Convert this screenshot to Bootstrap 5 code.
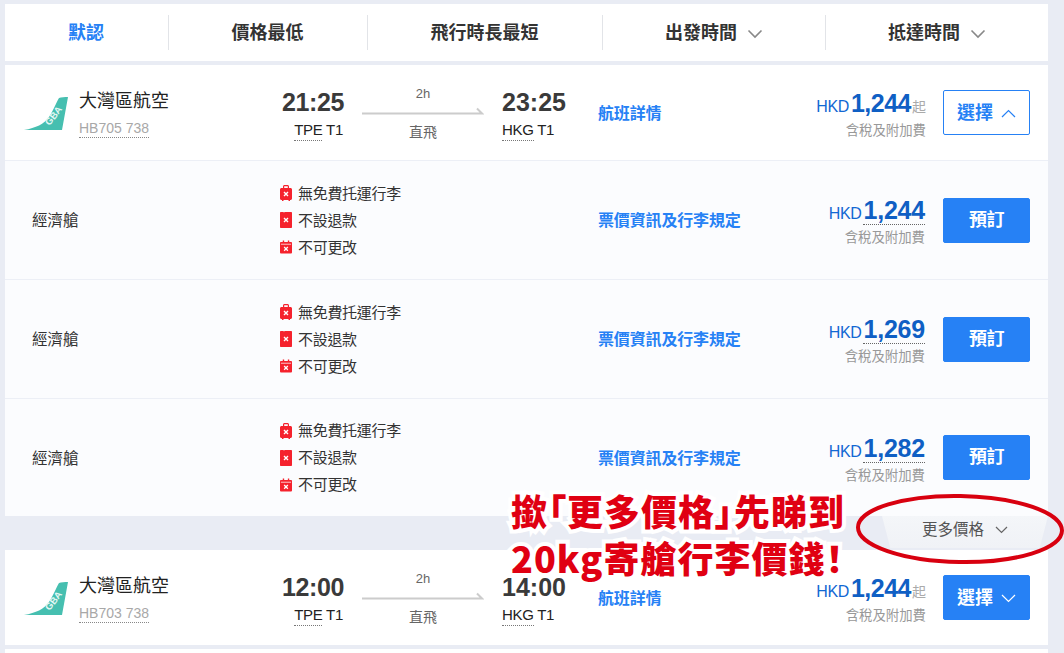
<!DOCTYPE html>
<html lang="zh-Hant">
<head>
<meta charset="utf-8">
<title>航班列表</title>
<link href="https://cdn.jsdelivr.net/npm/bootstrap@5.3.0/dist/css/bootstrap.min.css" rel="stylesheet">
<style>
html,body{height:653px;overflow:hidden}
body{background:#e9ecf4;font-family:"Liberation Sans","Noto Sans CJK TC",sans-serif;color:#333;position:relative}
.shell{padding:4px 16px 0 5px}
.sorter{height:57px;background:#fff;margin-bottom:4px}
.sort-tab{height:35px;font-size:18px;font-weight:700;color:#333;gap:10px;padding-top:2px}
.sort-tab+.sort-tab{border-left:1px solid #e2e4e8}
.w1{width:163px;padding-right:1px}.w2{width:199px;padding-right:1px}.w3{width:235px;padding-right:1px}.w4{width:223px}.w5{width:223px}
.sort-on{color:#2681f5}
.chev{width:16px;height:10px;fill:none;stroke:#888;stroke-width:1.6}
.flight,.fare{display:grid;grid-template-columns:270px 323px 201px 127px 122px;align-items:center}
.flight{height:95px;background:#fff}
.fare{height:118px;background:#fbfcfe;border-top:1px solid #eceff6}
.fare.first{height:119px}
.airline{padding-left:18px;gap:10px}
.airline svg{width:46px;height:36px;flex:none}
.airline-text{margin-top:3px}
.carrier{font-size:18px;line-height:24px;color:#222}
.craft{display:inline-block;font-size:14px;line-height:18px;color:#a8a8a8;border-bottom:1px dotted #888;margin-top:6px}
.route{padding-left:7px}
.stop{flex:none;margin-top:2px}
.stop-from{width:61px;text-align:right}
.stop-to{padding-left:18px}
.clock{font-size:25px;line-height:28px;font-weight:700;color:#3a3a3a;letter-spacing:-.4px}
.stop-to .clock{letter-spacing:0}
.port{font-size:15px;line-height:20px;letter-spacing:-.3px;color:#222;margin-top:4px}
.port span{border-bottom:1px dotted #777;padding-bottom:2px}
.leg{width:122px;margin-left:19px;text-align:center;color:#666}
.leg-top{font-size:13px;line-height:16px;margin-bottom:5px}
.leg-bot{font-size:14px;line-height:18px;margin-top:8px}
.leg svg{display:block;width:122px;height:8px}
.deep{font-size:16px;font-weight:700;color:#2681f5;text-decoration:none;letter-spacing:-.15px;margin-top:2px}
.cost{text-align:right;padding-top:3px}
.cost-top{display:flex;justify-content:flex-end;align-items:baseline;line-height:29px}
.hkd{font-size:16px;letter-spacing:-.4px;color:#1268d3;margin-right:2px}
.amt{font-size:25px;font-weight:700;color:#0f5fc4;letter-spacing:-.5px}
.qi{font-size:14px;color:#aaa;margin-left:1px}
.fee{font-size:13.4px;line-height:18px;color:#999}
.fare .amt{border-bottom:1px dotted #666;line-height:28px;letter-spacing:-.2px}
.fare .fee{margin-top:1px}
.fare .cost{padding-right:1px}
.act{padding-left:17px}
.btn-pick,.btn-book{width:87px;height:45px;border-radius:2px;font-size:18px;font-weight:700;display:flex;align-items:center;justify-content:center;gap:8px;padding:0;border:1px solid #2681f5}
.btn-pick{background:#fff;color:#2681f5;padding-top:2px}
.btn-pick svg{width:15px;height:9px;fill:none;stroke:#2681f5;stroke-width:1.2}
.btn-fill{background:#2681f5;color:#fff}
.btn-fill svg{stroke:#fff}
.btn-book{background:#2681f5;color:#fff;letter-spacing:-.5px}
.label{font-size:15.5px;padding-left:27px;color:#333;margin-top:2px}
.rules{padding-left:5px;margin:0;list-style:none;font-size:15px;line-height:27px;color:#333;letter-spacing:-.3px}
.rules li{display:flex;align-items:center;gap:6px;margin-left:0}
.rules svg{width:12px;height:16px;flex:none;fill:#f5222d}
.more-bar{height:34px;display:flex;justify-content:flex-end}
.more-tab{width:166px;height:32px;background:linear-gradient(#f4f6f9,#f0f2f6);clip-path:polygon(0 0,100% 0,95% 100%,5% 100%);font-size:15.5px;color:#555;gap:11px;padding-bottom:5px}
.more-tab svg{width:13px;height:8px;fill:none;stroke:#666;stroke-width:1.2}
.next-sliver{height:20px;background:#fff;margin-top:4px}
.callout{position:absolute;left:511px;top:487px;font-family:"Noto Sans CJK TC",sans-serif;font-weight:900;font-size:36px;line-height:47px;color:#e00012;-webkit-text-stroke:8px #fff;paint-order:stroke fill;font-feature-settings:"palt";white-space:nowrap;letter-spacing:1px}
.ring{position:absolute;left:850px;top:488px;width:214px;height:84px;fill:none;stroke:#d8000f;stroke-width:4}
</style>
</head>
<body>
<svg width="0" height="0" class="position-absolute">
  <defs>
    <symbol id="tail" viewBox="0 0 46 36">
      <path d="M1 35C13 33 21 29 26 22C30 16 33 8 36 3C38 2 42 2 45 2L39 35Z" fill="#46bfb0"/>
      <text x="0" y="0" transform="translate(26.600 31) rotate(-52)" font-family="Liberation Sans" font-size="9.500" font-weight="700" fill="#e4f7f4">GBA</text>
    </symbol>
    <symbol id="ic-bag" viewBox="0 0 12 16">
      <path d="M3 3V1.500C3 .7 3.700 0 4.500 0h3C8.300 0 9 .7 9 1.500V3h1.500C11.300 3 12 3.700 12 4.500v9c0 .8-.7 1.500-1.500 1.500H10v1H8.500v-1h-5v1H2v-1h-.5C.7 15 0 14.300 0 13.500v-9C0 3.700.7 3 1.500 3zM4.200 3h3.600V1.200H4.200z"/>
      <path d="M4 7l4 4M8 7l-4 4" stroke="#fff" stroke-width="1.400"/>
    </symbol>
    <symbol id="ic-tix" viewBox="0 0 12 16">
      <path d="M1 0h2.500c0 .8 1 .8 1 0h6.500c.6 0 1 .4 1 1v14c0 .6-.4 1-1 1H1c-.6 0-1-.4-1-1V1c0-.6.4-1 1-1z"/>
      <path d="M4 6l4 4M8 6l-4 4" stroke="#fff" stroke-width="1.400"/>
    </symbol>
    <symbol id="ic-cal" viewBox="0 0 13 16">
      <path d="M3 1h1.500v1.500h4V1H10v1.500h2c.6 0 1 .4 1 1V14c0 .6-.4 1-1 1H1c-.6 0-1-.4-1-1V3.500c0-.6.4-1 1-1h2z"/>
      <path d="M1 5h11" stroke="#fff" stroke-width=".8"/>
      <path d="M4.500 8l4 4M8.500 8l-4 4" stroke="#fff" stroke-width="1.400"/>
    </symbol>
  </defs>
</svg>

<div class="shell">
  <nav class="sorter d-flex align-items-center">
    <div class="sort-tab w1 d-flex align-items-center justify-content-center sort-on">默認</div>
    <div class="sort-tab w2 d-flex align-items-center justify-content-center">價格最低</div>
    <div class="sort-tab w3 d-flex align-items-center justify-content-center">飛行時長最短</div>
    <div class="sort-tab w4 d-flex align-items-center justify-content-center">出發時間<svg class="chev" viewBox="0 0 16 10"><path d="M1.500 1.500L8 8l6.500-6.500"/></svg></div>
    <div class="sort-tab w5 d-flex align-items-center justify-content-center">抵達時間<svg class="chev" viewBox="0 0 16 10"><path d="M1.500 1.500L8 8l6.500-6.500"/></svg></div>
  </nav>

  <section>
    <div class="flight">
      <div class="airline d-flex align-items-center">
        <svg><use href="#tail"/></svg>
        <div class="airline-text"><div class="carrier">大灣區航空</div><div class="craft">HB705 738</div></div>
      </div>
      <div class="route d-flex align-items-center">
        <div class="stop stop-from"><div class="clock">21:25</div><div class="port"><span>TPE</span> T1</div></div>
        <div class="leg stop"><div class="leg-top">2h</div><svg viewBox="0 0 122 8"><path d="M0 6.500H120L115 1.500" fill="none" stroke="#ccc" stroke-width="2"/></svg><div class="leg-bot">直飛</div></div>
        <div class="stop stop-to"><div class="clock">23:25</div><div class="port"><span>HKG</span> T1</div></div>
      </div>
      <a class="deep" href="#">航班詳情</a>
      <div class="cost"><div class="cost-top"><span class="hkd">HKD</span><span class="amt">1,244</span><span class="qi">起</span></div><div class="fee">含稅及附加費</div></div>
      <div class="act"><button class="btn btn-pick" type="button">選擇<svg viewBox="0 0 15 9"><path d="M1 8L7.500 1.500 14 8"/></svg></button></div>
    </div>

    <div class="fare first">
      <div class="label">經濟艙</div>
      <ul class="rules">
        <li><svg><use href="#ic-bag"/></svg>無免費托運行李</li>
        <li><svg><use href="#ic-tix"/></svg>不設退款</li>
        <li><svg><use href="#ic-cal"/></svg>不可更改</li>
      </ul>
      <a class="deep" href="#">票價資訊及行李規定</a>
      <div class="cost"><div class="cost-top"><span class="hkd">HKD</span><span class="amt">1,244</span></div><div class="fee">含稅及附加費</div></div>
      <div class="act"><button class="btn btn-book" type="button">預訂</button></div>
    </div>
    <div class="fare first">
      <div class="label">經濟艙</div>
      <ul class="rules">
        <li><svg><use href="#ic-bag"/></svg>無免費托運行李</li>
        <li><svg><use href="#ic-tix"/></svg>不設退款</li>
        <li><svg><use href="#ic-cal"/></svg>不可更改</li>
      </ul>
      <a class="deep" href="#">票價資訊及行李規定</a>
      <div class="cost"><div class="cost-top"><span class="hkd">HKD</span><span class="amt">1,269</span></div><div class="fee">含稅及附加費</div></div>
      <div class="act"><button class="btn btn-book" type="button">預訂</button></div>
    </div>
    <div class="fare">
      <div class="label">經濟艙</div>
      <ul class="rules">
        <li><svg><use href="#ic-bag"/></svg>無免費托運行李</li>
        <li><svg><use href="#ic-tix"/></svg>不設退款</li>
        <li><svg><use href="#ic-cal"/></svg>不可更改</li>
      </ul>
      <a class="deep" href="#">票價資訊及行李規定</a>
      <div class="cost"><div class="cost-top"><span class="hkd">HKD</span><span class="amt">1,282</span></div><div class="fee">含稅及附加費</div></div>
      <div class="act"><button class="btn btn-book" type="button">預訂</button></div>
    </div>
  </section>

  <div class="more-bar"><div class="more-tab d-flex align-items-center justify-content-center">更多價格<svg viewBox="0 0 13 8"><path d="M1 1l5.500 5.500L12 1"/></svg></div></div>

  <div class="flight">
    <div class="airline d-flex align-items-center">
      <svg><use href="#tail"/></svg>
      <div class="airline-text"><div class="carrier">大灣區航空</div><div class="craft">HB703 738</div></div>
    </div>
    <div class="route d-flex align-items-center">
      <div class="stop stop-from"><div class="clock">12:00</div><div class="port"><span>TPE</span> T1</div></div>
      <div class="leg stop"><div class="leg-top">2h</div><svg viewBox="0 0 122 8"><path d="M0 6.500H120L115 1.500" fill="none" stroke="#ccc" stroke-width="2"/></svg><div class="leg-bot">直飛</div></div>
      <div class="stop stop-to"><div class="clock">14:00</div><div class="port"><span>HKG</span> T1</div></div>
    </div>
    <a class="deep" href="#">航班詳情</a>
    <div class="cost"><div class="cost-top"><span class="hkd">HKD</span><span class="amt">1,244</span><span class="qi">起</span></div><div class="fee">含稅及附加費</div></div>
    <div class="act"><button class="btn btn-pick btn-fill" type="button">選擇<svg viewBox="0 0 15 9"><path d="M1 1l6.500 6.500L14 1"/></svg></button></div>
  </div>
  <div class="next-sliver"></div>
</div>

<div class="callout">撳「更多價格」先睇到<br>20kg寄艙行李價錢！</div>
<svg class="ring" viewBox="0 0 214 84"><ellipse cx="110" cy="41" rx="102" ry="33" transform="rotate(1 110 41)"/></svg>
</body>
</html>
